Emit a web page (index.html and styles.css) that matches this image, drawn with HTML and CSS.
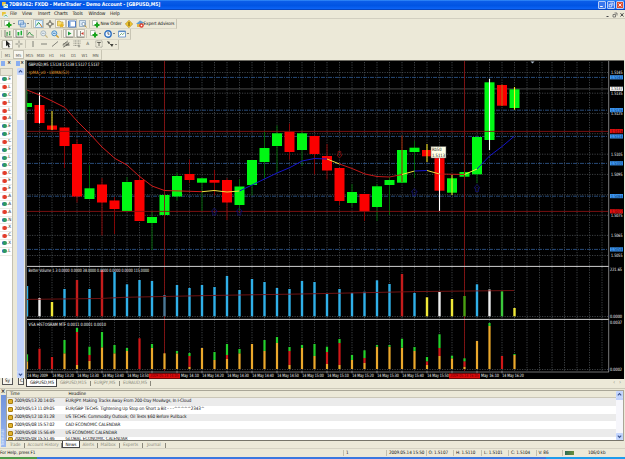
FILE: index.html
```html
<!DOCTYPE html>
<html lang="en">
<head>
    <meta charset="UTF-8">
    <title>7DB9362: FXDD - MetaTrader - Demo Account - [GBPUSD,M5]</title>
    <link rel="stylesheet" href="styles.css">
</head>
<body>
    <svg class="sprites" width="0" height="0">
        <symbol id="i-app" viewBox="0 0 8 8"><path d="M0 0h5v5H0z" fill="#e8c53c"/><path d="M2 3h6v5H2z" fill="#dfeefc"/><path d="M3 6l2-2 2 2" stroke="#2b9b3c" fill="none"/></symbol>
        <symbol id="i-add" viewBox="0 0 8 8"><path d="M.5.5h4.500v5H.5z" fill="#fff" stroke="#8c9c8c" stroke-width=".6"/><path d="M5 2.600v5M2.500 5.100h5" stroke="#18a41c" stroke-width="2"/></symbol>
        <symbol id="i-profiles" viewBox="0 0 8 8"><path d="M.5.7h5v4h-5zM2.300 3h5v4h-5z" fill="#d5e6f8" stroke="#5f8fc4" stroke-width=".8"/></symbol>
        <symbol id="i-watch" viewBox="0 0 8 8"><path d="M.5.5h7v7h-7z" fill="#e6f3fb" stroke="#78a8d0" stroke-width=".7"/><path d="M1.500 5.500l2-3 2 2" stroke="#25963a" fill="none"/><path d="M5 4l2 3" stroke="#cf7a1e"/></symbol>
        <symbol id="i-cross" viewBox="0 0 8 8"><circle cx="4" cy="4" r="2.200" fill="none" stroke="#77776f" stroke-width=".8"/><path d="M4 0v3M4 5v3M0 4h3M5 4h3" stroke="#4e4e48" stroke-width=".9"/></symbol>
        <symbol id="i-folder" viewBox="0 0 8 8"><path d="M.5 1h2.500l1 1h2v4h-5.500z" fill="#f6dd73" stroke="#b89322" stroke-width=".6"/><path d="M4.500 3l1 1.500 2 .3-1.500 1.200.5 1.800-2-1-1.500 1 .2-2-1-1.200 1.600-.1z" fill="#e7b522"/></symbol>
        <symbol id="i-window" viewBox="0 0 8 8"><path d="M.5 1h7v6h-7z" fill="#fff" stroke="#3d6fc0" stroke-width=".9"/><path d="M1 1.500h1.500v5H1z" fill="#6c9fe0"/></symbol>
        <symbol id="i-tester" viewBox="0 0 8 8"><path d="M.5.5h6v6h-6z" fill="#d9e8f5" stroke="#7e9ab5" stroke-width=".7"/><circle cx="4.500" cy="4" r="1.600" fill="#fff" stroke="#5a7ea4" stroke-width=".7"/><path d="M5.600 5.200l2 2.300" stroke="#c09732"/></symbol>
        <symbol id="i-diamond" viewBox="0 0 8 8"><path d="M4 .3l3.700 3.700L4 7.700.3 4z" fill="#f1c62f" stroke="#b08a16" stroke-width=".6"/><path d="M4 2v4M3 3h2M3 5h2" stroke="#7a6010" stroke-width=".7"/></symbol>
        <symbol id="i-expert" viewBox="0 0 8 8"><path d="M0 4l4-3.500 4 2-3 2z" fill="#5f9ed0"/><path d="M1 4h4v3H1z" fill="#ddb64a"/><circle cx="5.500" cy="5.500" r="2.200" fill="#d93322"/><path d="M4.700 4.700h1.600v1.600H4.700z" fill="#fff"/></symbol>
        <symbol id="i-bars" viewBox="0 0 8 8"><path d="M1 0v7h7" stroke="#606058" fill="none" stroke-width=".7"/><path d="M3 2v4M5.800 1v4.500M3 3h1M5 4.500h1" stroke="#238f3b" stroke-width=".9"/></symbol>
        <symbol id="i-candles" viewBox="0 0 8 8"><path d="M1 0v7h7" stroke="#606058" fill="none" stroke-width=".7"/><path d="M2.500 2h1.800v3.500H2.500zM5.500.8h1.600v4.500H5.500z" fill="#1fae37"/></symbol>
        <symbol id="i-line" viewBox="0 0 8 8"><path d="M1 0v7h7" stroke="#606058" fill="none" stroke-width=".7"/><path d="M1.500 5l2-3 1.500 2.500 2.500 1" stroke="#238f3b" fill="none" stroke-width=".8"/></symbol>
        <symbol id="i-zoomout" viewBox="0 0 8 8"><circle cx="3.300" cy="3.300" r="2.500" fill="#e8f0f4" stroke="#9aaab4" stroke-width=".8"/><path d="M5.200 5.200L7.600 7.600" stroke="#c7b780" stroke-width="1.200"/><path d="M2 3.300h2.600" stroke="#8294a0" stroke-width=".7"/></symbol>
        <symbol id="i-zoomin" viewBox="0 0 8 8"><circle cx="3.300" cy="3.300" r="2.500" fill="#cfe8fa" stroke="#3a86c6" stroke-width=".9"/><path d="M5.200 5.200L7.600 7.600" stroke="#cf9d28" stroke-width="1.300"/><path d="M2 3.300h2.600" stroke="#2566a8" stroke-width=".8"/></symbol>
        <symbol id="i-scroll" viewBox="0 0 8 8"><path d="M1 0v7h7" stroke="#606058" fill="none" stroke-width=".7"/><path d="M3 1.500l3.500 2L3 5.500z" fill="#1d9a3c"/></symbol>
        <symbol id="i-shift" viewBox="0 0 8 8"><path d="M1 0v7h7M4.500 1v5" stroke="#606058" fill="none" stroke-width=".7"/><path d="M7.500 2L5 3.500l2.500 1.500z" fill="#cc3326"/></symbol>
        <symbol id="i-clock" viewBox="0 0 8 8"><circle cx="4" cy="4" r="3.200" fill="#eef6ff" stroke="#2d6fc0" stroke-width="1.400"/><path d="M4 2v2.200h1.500" stroke="#333" fill="none" stroke-width=".7"/></symbol>
        <symbol id="i-template" viewBox="0 0 8 8"><path d="M.5 1h7v6h-7z" fill="#fff" stroke="#5a8cc6" stroke-width=".8"/><path d="M.5 1.500h7" stroke="#5a8cc6" stroke-width="1.200"/><path d="M1.500 5.500l2-2 1 1 2-1.500" stroke="#3c8a48" fill="none" stroke-width=".7"/></symbol>
        <symbol id="i-cursor" viewBox="0 0 8 8"><path d="M2 .3v6l1.500-1.300L4.700 7.700l1.200-.6-1.200-2.500h1.900z" fill="#222"/></symbol>
        <symbol id="i-plus" viewBox="0 0 8 8"><path d="M4 .5v2.800M4 4.700v2.800M.5 4h2.800M4.700 4h2.800" stroke="#77776f" stroke-width=".8"/></symbol>
        <symbol id="i-vline" viewBox="0 0 8 8"><path d="M4 1v6" stroke="#66665f" stroke-width=".8"/></symbol>
        <symbol id="i-hline" viewBox="0 0 8 8"><path d="M1 4h6" stroke="#66665f" stroke-width=".8"/></symbol>
        <symbol id="i-trend" viewBox="0 0 8 8"><path d="M1 6.500L7 1.500" stroke="#66665f" stroke-width=".8"/></symbol>
        <symbol id="i-channel" viewBox="0 0 8 8"><path d="M.5 5L6 .8M1.500 7.300l6-4.500M2 3v4M4 2v4M6 2v3" stroke="#5c5c54" stroke-width=".7"/><path d="M4 5h3.500" stroke="#4a4a44"/></symbol>
        <symbol id="i-fibo" viewBox="0 0 8 8"><path d="M.5 1h7M.5 3.200h7M.5 5.400h5" stroke="#77776f" stroke-width=".8" stroke-dasharray="1 .5"/><path d="M6 4.500v3M4.800 6h2.500" stroke="#77776f" stroke-width=".7"/></symbol>
        <symbol id="i-label" viewBox="0 0 8 8"><path d="M.8.800h6.400v6.400H.8z" fill="none" stroke="#77776f" stroke-width=".6" stroke-dasharray=".8 .5"/><path d="M2.200 2.500h3.600M4 2.500v3.500" stroke="#44443e" stroke-width=".8"/></symbol>
        <symbol id="i-arrows" viewBox="0 0 8 8"><path d="M1 1l1.500 3L4 2zM4 4l2 3 1.500-3z" fill="#44443e"/><path d="M2 2l4 4" stroke="#44443e" stroke-width=".7"/></symbol>
    </svg>

    <header class="titlebar">
        <svg class="app-icon"><use href="#i-app"/></svg>
        <span class="title">7DB9362: FXDD - MetaTrader - Demo Account - [GBPUSD,M5]</span>
        <div class="window-buttons">
            <span class="wb"><svg viewBox="0 0 8 8"><path d="M1.500 6h3.500" stroke="#fff" stroke-width="1.400"/></svg></span>
            <span class="wb"><svg viewBox="0 0 8 8"><path d="M3 1.500h3.500v3.500M1.500 3.200h3.300v3.300H1.500z" stroke="#fff" fill="none" stroke-width=".9"/></svg></span>
            <span class="wb wb-close"><svg viewBox="0 0 8 8"><path d="M2 2l4 4M6 2L2 6" stroke="#fff" stroke-width="1.200"/></svg></span>
        </div>
    </header>

    <nav class="menubar">
        <svg class="app-icon"><use href="#i-app"/></svg>
        <span class="m-file">File</span><span class="m-view">View</span><span class="m-insert">Insert</span><span class="m-charts">Charts</span><span class="m-tools">Tools</span><span class="m-window">Window</span><span class="m-help">Help</span>
        <svg class="mdi" viewBox="0 0 20 6"><path d="M1.500 4.500h2" stroke="#444" stroke-width="1"/><path d="M9.500 1h2.500v2.500M8 2.500h2.500V5H8z" stroke="#555" fill="none" stroke-width=".7"/><path d="M15.500 1.200l3 3.300M18.500 1.200l-3 3.300" stroke="#333" stroke-width=".9"/></svg>
    </nav>

    <section class="toolbars">
        <div class="toolbar tb-standard">
            <i class="grip"></i>
            <span class="btn menu"><svg><use href="#i-add"/></svg></span>
            <span class="btn menu"><svg><use href="#i-profiles"/></svg></span>
            <i class="sep"></i>
            <span class="btn on"><svg><use href="#i-watch"/></svg></span>
            <span class="btn"><svg><use href="#i-cross"/></svg></span>
            <span class="btn on"><svg><use href="#i-folder"/></svg></span>
            <span class="btn on"><svg><use href="#i-window"/></svg></span>
            <span class="btn"><svg><use href="#i-tester"/></svg></span>
            <i class="sep"></i>
            <span class="btn wide order"><svg><use href="#i-add"/></svg><span>New Order</span></span>
            <span class="btn"><svg><use href="#i-diamond"/></svg></span>
            <span class="btn wide advisors"><svg><use href="#i-expert"/></svg><span>Expert Advisors</span></span>
        </div>
        <div class="toolbar tb-charts">
            <i class="grip"></i>
            <span class="btn"><svg><use href="#i-bars"/></svg></span>
            <span class="btn on"><svg><use href="#i-candles"/></svg></span>
            <span class="btn"><svg><use href="#i-line"/></svg></span>
            <i class="sep"></i>
            <span class="btn"><svg><use href="#i-zoomout"/></svg></span>
            <span class="btn"><svg><use href="#i-zoomin"/></svg></span>
            <i class="sep"></i>
            <span class="btn on"><svg><use href="#i-scroll"/></svg></span>
            <span class="btn on"><svg><use href="#i-shift"/></svg></span>
            <i class="sep"></i>
            <span class="btn menu"><svg><use href="#i-add"/></svg></span>
            <span class="btn menu"><svg><use href="#i-clock"/></svg></span>
            <span class="btn menu"><svg><use href="#i-template"/></svg></span>
        </div>
        <div class="toolbar tb-studies">
            <i class="grip"></i>
            <span class="btn on"><svg><use href="#i-cursor"/></svg></span>
            <span class="btn"><svg><use href="#i-plus"/></svg></span>
            <i class="sep"></i>
            <span class="btn"><svg><use href="#i-vline"/></svg></span>
            <span class="btn"><svg><use href="#i-hline"/></svg></span>
            <span class="btn"><svg><use href="#i-trend"/></svg></span>
            <span class="btn"><svg><use href="#i-channel"/></svg></span>
            <span class="btn"><svg><use href="#i-fibo"/></svg></span>
            <span class="btn letter">A</span>
            <span class="btn"><svg><use href="#i-label"/></svg></span>
            <span class="btn menu"><svg><use href="#i-arrows"/></svg></span>
        </div>
        <div class="toolbar tb-periods">
            <i class="grip"></i>
            <span class="btn">M1</span><span class="btn on">M5</span><span class="btn">M15</span><span class="btn">M30</span><span class="btn">H1</span><span class="btn">H4</span><span class="btn">D1</span><span class="btn">W1</span><span class="btn">MN</span>
        </div>
    </section>

    <main class="workspace">
        <aside class="panel market">
            <div class="panel-title"><i></i><b>×</b></div>
            <div class="market-head"></div>
            <div class="market-list" id="symbols"></div>
            <div class="side-tab">Sy</div>
        </aside>
        <aside class="panel navigator">
            <div class="panel-title"><i></i><b>×</b></div>
            <div class="vscroll">
                <svg viewBox="0 0 7 7"><path d="M1.800 4.300l1.700-1.700 1.700 1.700" /></svg>
                <i class="thumb"></i>
                <svg viewBox="0 0 7 7"><path d="M1.800 2.700l1.700 1.700 1.700-1.700" /></svg>
            </div>
            <div class="side-tab">C</div>
        </aside>
        <section class="charts">
            <svg class="chart" id="chart" viewBox="25 60 600 319"></svg>
            <div class="chart-tabs">
                <span class="active">GBPUSD,M5</span><span class="c2">GBPUSD,M15</span><span class="c3">EURJPY,M5</span><span class="c4">EURAUD,M5</span>
                <em>‹</em><em>›</em>
            </div>
        </section>
    </main>

    <section class="terminal">
        <div class="terminal-side"><b>×</b><span>Terminal</span></div>
        <div class="terminal-body">
            <div class="news">
                <div class="news-table">
                    <div class="news-head"><span>Time</span><span>Headline</span></div>
                    <div class="news-row"><i></i><span>2009/05/13 20:14:05</span><p>EUR/JPY: Making Tracks Away From 200-Day MovAvgs, In I-Cloud</p></div>
                    <div class="news-row"><i></i><span>2009/05/13 11:09:05</span><p>EUR/GBP TECHS: Tightening Up Stop on Short a Bit - - -^^^^^2343^</p></div>
                    <div class="news-row"><i></i><span>2009/05/12 10:31:28</span><p>US TECHS: Commodity Outlook; Oil Tests $60 Before Pullback</p></div>
                    <div class="news-row"><i></i><span>2009/05/08 15:57:02</span><p>CAD ECONOMIC CALENDAR</p></div>
                    <div class="news-row"><i></i><span>2009/05/08 15:56:49</span><p>US ECONOMIC CALENDAR</p></div>
                    <div class="news-row last"><i></i><span>2009/05/08 15:51:46</span><p>GLOBAL ECONOMIC CALENDAR</p></div>
                </div>
                <div class="vscroll">
                    <svg viewBox="0 0 7 7"><path d="M1.800 4.300l1.700-1.700 1.700 1.700" /></svg>
                    <i class="track"></i>
                    <svg viewBox="0 0 7 7"><path d="M1.800 2.700l1.700 1.700 1.700-1.700" /></svg>
                </div>
            </div>
            <div class="terminal-tabs">
                <span class="t1">Trade</span><span class="t2">Account History</span><span class="t3 active">News</span><span class="t4">Alerts</span><span class="t5">Mailbox</span><span class="t6">Experts</span><span class="t7">Journal</span>
            </div>
        </div>
    </section>

    <footer class="statusbar">
        <span class="s-help">For Help, press F1</span>
        <span class="s-profile">1</span>
        <span class="s-date">2009.05.14 15:50</span>
        <span class="s-o">O: 1.5107</span>
        <span class="s-h">H: 1.5110</span>
        <span class="s-l">L: 1.5101</span>
        <span class="s-c">C: 1.5104</span>
        <span class="s-v">V: 86</span>
        <span class="s-net"><i></i>106/0 kb</span>
    </footer>
    <div class="taskbar"><i class="start"></i><i class="tasks"></i><i class="tray"></i></div>

    <script src="chart.js"></script>
</body>
</html>
```

FILE: styles.css
```css
* {
    box-sizing: border-box;
}

body {
    margin: 0;
    width: 625px;
    height: 459px;
    overflow: hidden;
    display: flex;
    flex-direction: column;
    background: #ece9d8;
    font-family: "DejaVu Sans Condensed", "DejaVu Sans", sans-serif;
    font-size: 4.6px;
    letter-spacing: -0.1px;
    line-height: 5px;
    color: #111;
    text-rendering: geometricPrecision;
    white-space: nowrap;
}

svg {
    display: block;
}

.sprites {
    position: absolute;
}

i, em, b {
    font-style: normal;
}

.app-icon {
    width: 6px;
    height: 6px;
    flex: none;
}

/* title + menu */
.titlebar {
    height: 10px;
    flex: none;
    display: flex;
    align-items: center;
    padding: 0 1px 0 2px;
    background: linear-gradient(#3a93fb 0, #0a5ce8 15%, #0054e3 55%, #0b62f4 85%, #0539a8 100%);
    color: #fff;
}

.title {
    margin-left: 1px;
    font-size: 5.05px;
    font-weight: bold;
    flex: 1;
}

.window-buttons {
    display: flex;
    gap: 1px;
}

.wb {
    width: 8px;
    height: 8px;
    border: 0.5px solid #b6cdf7;
    border-radius: 1px;
    background: #3b77ec;
}

.wb svg {
    width: 100%;
    height: 100%;
}

.wb-close {
    background: #dd5030;
}

.menubar {
    height: 9px;
    flex: none;
    display: flex;
    align-items: center;
    padding: 1px 0 0 2px;
    border-bottom: 1px solid #d2cfc0;
    font-size: 4.9px;
}

.m-file { width: 12px; margin-left: 2px; }
.m-view { width: 16px; }
.m-insert { width: 16px; }
.m-charts { width: 18.5px; }
.m-tools { width: 16px; }
.m-window { width: 21.5px; }

.mdi {
    width: 20px;
    height: 6px;
    margin-left: auto;
}

/* toolbars */
.toolbars {
    height: 41px;
    flex: none;
    display: grid;
    grid-template-rows: 10px 10.5px 10.5px 10px;
    justify-items: start;
}

.toolbar {
    display: flex;
    align-items: center;
    padding-left: 1px;
    border-right: 1px solid #c8c5b4;
    border-bottom: 1px solid #dad7c7;
}

.grip {
    width: 1px;
    height: 7px;
    background: #cfccbc;
}

.sep {
    width: 1px;
    height: 8px;
    margin: 0 1px;
    background: #cbc8b8;
}

.btn {
    width: 11px;
    height: 9px;
    display: flex;
    align-items: center;
    justify-content: center;
    color: #55554e;
}

.btn svg {
    width: 8px;
    height: 8px;
    flex: none;
}

.btn.on {
    background: #f8f7f1;
    border: 0.5px solid #c4c1b2;
}

.btn.menu {
    width: 14px;
}

.btn.menu::after {
    content: "";
    margin-left: 1px;
    border: 1px solid transparent;
    border-top-color: #222;
    border-bottom: 0;
}

.btn.wide {
    color: #111;
}

.btn.wide span {
    padding-top: 1px;
}

.letter {
    padding-top: 1px;
}

.order { width: 32px; }
.advisors { width: 42px; }

.tb-periods .btn {
    padding-top: 1px;
    font-size: 4.2px;
}

/* side panels */
.workspace {
    height: 328px;
    flex: none;
    display: flex;
}

.panel {
    display: flex;
    flex-direction: column;
}

.market {
    width: 13px;
    margin-right: 2px;
}

.navigator {
    width: 9px;
    margin-right: 1px;
}

.panel-title {
    height: 8px;
    display: flex;
    align-items: center;
    justify-content: space-between;
    padding: 0 2px 2px 1px;
    font-size: 5px;
}

.navigator .panel-title {
    padding-right: 0;
}

.panel-title i {
    width: 4px;
    height: 5px;
    background: #89aef0;
}

.market-head {
    height: 8px;
    border: 0.5px solid #c8c5b4;
    background: #e8e5d6;
}

.market-list {
    height: 302px;
    background: #fff;
    border-right: 1px solid #c4c1b2;
}

.symbol {
    height: 7.82px;
    display: flex;
    align-items: center;
    padding-left: 2px;
    border-bottom: 0.5px solid #ecebe6;
    overflow: hidden;
}

.symbol i {
    width: 4.5px;
    height: 4px;
    margin-right: 0.5px;
    flex: none;
    border-radius: 2px;
    background: #2c9a60;
    border-left: 1px solid #3868b8;
}

.symbol.down i {
    background: #e23c28;
    border-left-color: #e88;
}

.side-tab {
    height: 7px;
    margin-left: 2px;
    padding: 1px 0 0 2px;
    border: 0.5px solid #555;
    border-top: 0;
    background: #f6f5ee;
}

.navigator .side-tab {
    margin-left: 3px;
    padding-left: 1px;
}

.vscroll {
    width: 7px;
    display: flex;
    flex-direction: column;
    background: #f6f6fb;
}

.vscroll svg {
    width: 7px;
    height: 7px;
    flex: none;
    background: #c3d5fd;
    border-radius: 1px;
}

.vscroll path {
    fill: none;
    stroke: #3d5590;
    stroke-width: 1.1;
}

.vscroll .thumb {
    flex: 1;
    background: #c1d2fb;
}

.vscroll .track {
    flex: 1;
    border-top: 2px solid #c1d2fb;
}

.navigator .vscroll {
    height: 310px;
    margin-left: 2px;
}

.navigator .thumb {
    margin-top: 45px;
}

/* chart window */
.charts {
    width: 600px;
    display: flex;
    flex-direction: column;
}

.chart {
    width: 600px;
    height: 319px;
    flex: none;
}

.chart text {
    font-size: 4.5px;
    letter-spacing: 0;
}

.chart-tabs {
    height: 9px;
    display: flex;
    padding-left: 1px;
    color: #8b897c;
}

.chart-tabs span {
    height: 5px;
    margin-top: 2px;
    padding-left: 3px;
    border-right: 0.5px solid #8b897c;
}

.chart-tabs .active {
    width: 31px;
    height: 8px;
    margin-top: 0;
    padding: 2px 0 0 3px;
    background: #fff;
    color: #111;
    border: 0.5px solid #444;
    border-top: 0;
}

.c2 { width: 34px; }
.c3 { width: 29px; }
.c4 { width: 31px; }

.chart-tabs em {
    margin: 1px 4px 0 0;
    font-size: 6px;
}

.chart-tabs span + em {
    margin-left: auto;
}

/* terminal */
.terminal {
    height: 60px;
    flex: none;
    display: flex;
    border-top: 1px solid #cbc8b8;
}

.terminal-side {
    width: 6px;
    height: 58px;
    display: flex;
    flex-direction: column;
    align-items: center;
}

.terminal-side b {
    height: 6px;
    font-size: 6px;
}

.terminal-side span {
    flex: 1;
    width: 5px;
    writing-mode: vertical-rl;
    transform: rotate(180deg);
    background: linear-gradient(#9ab8f0, #7093dc);
    color: #dfe9fd;
    padding-top: 1px;
}

.terminal-body {
    flex: 1;
    padding: 1px 1px 0 0;
}

.news {
    height: 51px;
    display: flex;
    border: 0.5px solid #a9a697;
    border-bottom: 1px solid #77756a;
}

.news-table {
    flex: 1;
    overflow: hidden;
    background: #fff;
}

.news-head {
    height: 7px;
    display: grid;
    grid-template-columns: 58.5px 1fr;
    align-items: center;
    padding: 1px 0 0 3px;
    background: #ece9d8;
    border-bottom: 1px solid #cbc7b8;
}

.news-row {
    height: 7.8px;
    display: flex;
    align-items: center;
    padding-left: 1px;
}

.news-row:nth-child(even) {
    background: #ebebeb;
}

.news-row i {
    width: 5px;
    height: 5px;
    flex: none;
    margin-right: 1.5px;
    background: #e2b32c;
    border: 0.5px solid #a57c12;
    border-radius: 1px;
}

.news-row span {
    width: 51px;
    letter-spacing: -0.2px;
}

.news-row p {
    margin: 0;
}

.news-row.last {
    height: 4px;
    padding-top: 0.5px;
    align-items: flex-start;
    overflow: hidden;
}

.terminal-tabs {
    display: flex;
    height: 7.5px;
    color: #8b897c;
}

.terminal-tabs span {
    height: 5px;
    margin-top: 1.5px;
    text-align: center;
    border-right: 0.5px solid #8b897c;
}

.terminal-tabs .active {
    height: 7px;
    margin-top: 0;
    padding-top: 1.5px;
    background: #fff;
    color: #111;
    border: 0.5px solid #444;
    border-top: 0;
}

.t1 { width: 19px; }
.t2 { width: 37px; }
.t3 { width: 18px; }
.t4 { width: 17.5px; }
.t5 { width: 22px; }
.t6 { width: 23px; }
.t7 { width: 23.5px; }

/* status bar */
.statusbar {
    height: 9px;
    flex: none;
    display: flex;
    align-items: center;
    border-top: 1px solid #d6d3c4;
}

.statusbar span {
    height: 6px;
    padding: 1px 0 0 2px;
    border-left: 0.5px solid #c2bfae;
}

.statusbar .s-help {
    width: 343px;
    padding-left: 0;
    border: 0;
}

.s-profile { width: 43px; }
.s-date { width: 39.5px; }
.s-o { width: 27.5px; }
.s-h { width: 28px; }
.s-l { width: 27px; }
.s-c { width: 27.5px; }
.s-v { width: 26.5px; }

.s-net {
    display: flex;
    gap: 14px;
}

.s-net i {
    width: 9px;
    height: 4px;
    background: linear-gradient(90deg, #2c6a54, #6c8f3c);
}

.taskbar {
    flex: 1;
    display: flex;
}

.start { width: 37px; background: #4d9a48; }
.tasks { width: 509px; background: #3b78e0; }
.tray { flex: 1; background: #1e9cec; }
```

FILE: chart.js
```javascript
const svg = document.getElementById('chart');
const NS = 'http://www.w3.org/2000/svg';

const UP = '#00f814', DOWN = '#fb0000';
const DARK_UP = '#006c08', DARK_DOWN = '#8e0505';

// first bar at x = 27, one bar every 12.5
const barX = n => 27 + n * 12.5;

function draw(tag, attrs, text) {
    const el = document.createElementNS(NS, tag);
    for (const key in attrs) el.setAttribute(key, attrs[key]);
    if (text) el.textContent = text;
    svg.appendChild(el);
    return el;
}

function line(x1, y1, x2, y2, stroke, width = 1, dash = '') {
    draw('line', { x1, y1, x2, y2, stroke, 'stroke-width': width, 'stroke-dasharray': dash });
}

function rect(x, y, width, height, fill) {
    draw('rect', { x, y, width, height, fill });
}

function label(x, y, text, width, fill = '#fff') {
    draw('text', { x, y, textLength: width, lengthAdjust: 'spacingAndGlyphs', fill }, text);
}

// direction, body top, body bottom, wick top, wick bottom, wick colour
const candles = [
    ['u', 103, 107, 90, 112], ['d', 105, 123, 92.5, 123.5, '#fff'], ['d', 125.5, 129.7, 111, 130, '#e6d62a'],
    ['d', 127.5, 146, 127, 168], ['d', 144, 196.5, 139.5, 202.5], ['u', 188.3, 199, 165.5, 199],
    ['d', 184.5, 202.5, 178, 235.5], ['d', 200.5, 209, 197, 234], ['u', 182, 211, 177, 211],
    ['d', 180, 221, 176, 221], ['u', 217, 223, 211, 250], ['u', 195, 215, 195, 215],
    ['u', 176, 196.5, 173, 200.5], ['d', 174, 180, 159.5, 183], ['u', 178.3, 182.7, 178, 211],
    ['d', 180, 182.7, 170, 195.5], ['d', 180, 202.5, 178, 220], ['u', 186.5, 205, 179, 211],
    ['u', 160, 185, 160, 195.5], ['u', 148, 162, 131, 178.5], ['u', 133.3, 146, 125.5, 173],
    ['d', 131.7, 152, 123.5, 159.5], ['u', 133.3, 150, 130.5, 166], ['d', 136, 154, 136, 174.5],
    ['d', 156, 170.5, 144, 179.5], ['d', 168, 201, 168, 205], ['u', 192, 203, 184, 207],
    ['d', 194, 211.3, 194, 221], ['u', 186.3, 207, 184, 221], ['u', 180, 185, 177, 215],
    ['u', 150, 182.7, 135.5, 182, '#9a2a08'], ['u', 147.7, 152, 141, 178], ['d', 150, 156.3, 144, 162, '#f0e020'],
    ['d', 157, 190.7, 157, 211, '#fff'], ['u', 178.3, 192.7, 174.7, 195, '#d8f020'], ['u', 172, 176.7, 159.7, 176, '#4c8c08'],
    ['u', 137, 174.3, 137, 183], ['u', 82.3, 140, 78.7, 150, '#fff'], ['d', 85, 105.7, 84.5, 106, '#c06a10'],
    ['u', 89.3, 108, 87, 109.7, '#f0f020']
];

const BLUE = '#30b0e8', WHITE = '#eee', YELLOW = '#f0e838', RED = '#c41c1c';
const volumeTops = [286, 298, 302, 289, 280, 289, 270, 272, 284.3, 280, 281, 295, 285, 288, 285, 287, 276, 290, 279, 282,
    288, 289, 281, 282, 294, 289, 293, 291.7, 280.3, 284, 274, 293, 297.3, 292, 299, 296, 284.3, 289.5, 291.3, 308];
const volumeColors = {
    1: WHITE, 2: YELLOW, 4: RED, 6: RED, 11: '#4a7896', 30: RED, 32: YELLOW, 33: WHITE, 34: YELLOW,
    35: '#4aa012', 37: WHITE, 38: '#3cc83c', 39: YELLOW
};

// tops of the orange, red and green parts, 0 when a part is absent
const histogram = [
    [361.3, 0, 354.3], [0, 348.7, 0], [0, 357, 0], [353.3, 0, 340], [365, 332, 328], [361, 355, 346.7],
    [347.3, 0, 332], [353.3, 0, 345], [351, 0, 348], [0, 338.3, 0], [348, 0, 344], [353.3, 0, 0],
    [353.3, 0, 351], [366.7, 356, 353], [348, 0, 0], [360, 0, 352], [359, 355, 344], [353.3, 0, 349],
    [344, 0, 0], [351, 0, 340], [343, 0, 337], [365, 351, 347], [348, 0, 345], [356, 0, 344],
    [364, 352, 346.7], [365, 343, 339], [360, 0, 355], [363, 358, 350.3], [346.7, 0, 345], [346.7, 0, 345],
    [347.7, 0, 338.7], [351, 0, 347], [365, 361.3, 357], [356, 348, 334.3], [358.3, 0, 355.7],
    [366.7, 361.3, 358.3], [341, 0, 0], [326, 0, 323], [0, 356, 0], [355, 0, 354]
];

const average = [
    ['#d01c1c', '27,90 39.5,95 52,101 65,107.5 77,121 90,134 102,147 115,158.5 127,165 139,176 152,186 164.5,190.5 202,191.7'],
    ['#f0e040', '202,191.7 214,190.5 227,192 239.5,191'],
    ['#1414c8', '239.5,191 252,185 277,173 290,167.5 302,161 314.5,158.5 327,159'],
    ['#f0e040', '327,159 339.5,164'],
    ['#c01818', '339.5,164 352,168.5 365,174 377,176.5 389.5,177 402,174.5'],
    ['#f0e040', '402,174.5 414.5,171'],
    ['#1414c8', '414.5,171 427,170.5'],
    ['#f0e040', '427,170.5 439.5,174'],
    ['#c01818', '439.5,174 464.5,174.5'],
    ['#f0f040', '464.5,174.5 477,169'],
    ['#1414c8', '477,169 489.5,156 502,146.5 514.5,136']
];

// window frame and background
rect(25, 60, 600, 319, '#000');
rect(25, 60, 2, 319, '#66645c');
rect(25, 60, 600, 1, '#6c6a62');
rect(624, 60, 1, 319, '#ece9d8');

// grid
for (let n = 1; n < 47; n++) line(barX(n), 62, barX(n), 371, '#4c5256', 0.8, '1.2 1.3');
for (const y of [72.5, 93.2, 113.5, 133.7, 154.2, 174.4, 194.7, 215.3, 235.4, 255.5, 316.5, 369.5]) {
    line(27, y, 608, y, '#4c5256', 0.8, '1.2 1.3');
}
for (const y of [77.4, 110.2, 136.4, 163.4, 196.2, 249.4]) line(27, y, 608, y, '#2c5286', 0.9, '4 1 1 1');
line(27, 88.9, 608, 88.9, '#484848');

// candles
candles.forEach(([dir, top, bottom, wickTop, wickBottom, wick], n) => {
    const x = barX(n);
    const left = n === 0 ? 27 : x - 5;
    const dark = dir === 'u' ? DARK_UP : DARK_DOWN;
    if (!wick) line(x, wickTop, x, wickBottom, dark, 0.9);
    rect(left, top, x + 5 - left, bottom - top, dir === 'u' ? UP : DOWN);
    if (wick) line(x, wickTop, x, wickBottom, wick, 1.1);
});

for (const y of [131.4, 211.4]) line(27, y, 608, y, '#861212', 0.9);
for (const n of [11, 35]) line(barX(n), 61, barX(n), 371, '#861212', 0.9);

for (const [stroke, points] of average) {
    draw('polyline', { points, stroke, fill: 'none', 'stroke-width': 1 });
}

// signal arrows
const up = 'l-3,3.5h1.5v3.5h3v-3.5h1.5z';
const down = 'l-2.5,-3h1.2v-3.5h2.6v3.5h1.2z';
for (const [x, y] of [[214.3, 208], [239.3, 208], [414.3, 188.5], [477, 184.5]]) {
    draw('path', { d: `M${x},${y}${up}`, fill: 'none', stroke: '#12126e', 'stroke-width': 0.8 });
}
draw('path', { d: `M339.5,158${down}`, fill: 'none', stroke: '#8a1010', 'stroke-width': 0.8 });
draw('path', { d: 'M530.5,61.5h4l-2,2z', fill: '#aebccc' });

// volume panel
volumeTops.forEach((top, n) => {
    rect(n ? barX(n) - 1.2 : 27, top, n ? 2.4 : 1.2, 316.3 - top, volumeColors[n] || BLUE);
});
draw('polyline', { points: '27,299.4 100,298.5 125,297.3 210,295.5 300,294 340,293.2 415,291.6 514,290.5', stroke: '#7c1414', fill: 'none', 'stroke-width': 0.9 });

// histogram panel
histogram.forEach((tops, n) => {
    let base = 369;
    tops.forEach((top, part) => {
        if (!top) return;
        rect(n ? barX(n) - 1.1 : 27, top, n ? 2.2 : 1.1, base - top, ['#eaa82c', '#d01818', '#24d02c'][part]);
        base = top;
    });
});

// panel borders and price axis
line(27, 266.4, 609, 266.4, '#d0d0d0');
line(27, 319.4, 609, 319.4, '#d0d0d0');
line(27, 372, 609, 372, '#8a8a8a', 0.8);
line(608.7, 61, 608.7, 372, '#9a9a9a', 0.8);

const prices = { 72: '1.5145', 93.7: '1.5135', 113.7: '1.5125', 154: '1.5105', 174.3: '1.5095', 215.3: '1.5075', 235.3: '1.5065', 255.5: '1.5055' };
for (const y in prices) label(611, +y + 1.6, prices[y], 11.5);
label(610, 271.1, '221.65', 12);
label(610, 317.6, '0.0000', 12);
label(610, 324.4, '0.0037', 12);
label(610, 370.8, '0.0002', 12);

const tags = [
    [77.2, '1.5142', '#3c96f0', '#06285c'], [110, '1.5126', '#3c96f0', '#06285c'], [136.3, '1.5114', '#3c96f0', '#06285c'],
    [163.2, '1.5100', '#3c96f0', '#06285c'], [196, '1.5084', '#3c96f0', '#06285c'], [249.3, '1.5058', '#3c96f0', '#06285c'],
    [131, '1.5116', '#e01010', '#400'], [211.2, '1.5077', '#e01010', '#400'], [88.7, '1.5137', '#f4f4f4', '#222']
];
for (const [y, text, bg, fg] of tags) {
    rect(610, y - 2, 13, 4.2, bg);
    label(611, y + 1.6, text, 11.5, fg);
}

// time axis
label(27.3, 377.4, '14 May 2009', 20.5);
for (let n = 2; n < 40; n += 2) {
    const minutes = 13 * 60 + 10 + n * 5;
    const time = Math.floor(minutes / 60) + ':' + String(minutes % 60).padStart(2, '0');
    line(barX(n), 371, barX(n), 373.3, '#aaa', 0.7);
    if (n === 10 || n === 34) continue;
    // the label after a red date tag starts behind it, only the month and time stay free
    if (n === 12 || n === 36) label(barX(n) + 4, 377.4, 'May ' + time, 18);
    else label(barX(n) + 0.3, 377.4, '14 May ' + time, 21.5);
}
for (const [x, text] of [[149, '2009.05.14 14:05'], [449, '2009.05.14 16:05']]) {
    rect(x, 373.5, 31, 5, '#e00c0c');
    label(x + 1, 377.4, text, 28.5, '#5c0000');
}

// indicator captions
label(28.5, 66.3, 'GBPUSD,M5  1.5128 1.5138 1.5127 1.5137', 71);
label(28.5, 74.3, 'rpMA_v0 - LWMA(52)', 40.5, '#e09420');
label(28.5, 272.3, 'Better Volume 1.3 0.0000 0.0000 38.0000 0.0000 0.0000 0.0000 115.0000', 120.5);
label(28.5, 325.8, 'VSA HISTOGRAM MTF 0.0011 0.0001 0.0010', 77.5);

// price tooltip
draw('rect', { x: 431, y: 146.5, width: 15, height: 11.5, fill: '#ffffe6', stroke: '#555', 'stroke-width': 0.5 });
label(432, 151.4, 'Rb50', 9.5, '#111');
label(432, 157, '1.5113', 13, '#111');

// market watch rows, a leading minus marks a falling quote
const symbols = ['E', '-L', 'C', '-L', '-L', '-A', 'E', 'F', '-C', 'E', 'L', 'C', '-C', '-E', '-E', '-A', 'A', '-A', 'N', '-X', '-C', 'X', 'L'];
document.getElementById('symbols').innerHTML = symbols.map(s =>
    `<div class="symbol${s[0] === '-' ? ' down' : ''}"><i></i>.${s.slice(-1)}</div>`).join('');
```
